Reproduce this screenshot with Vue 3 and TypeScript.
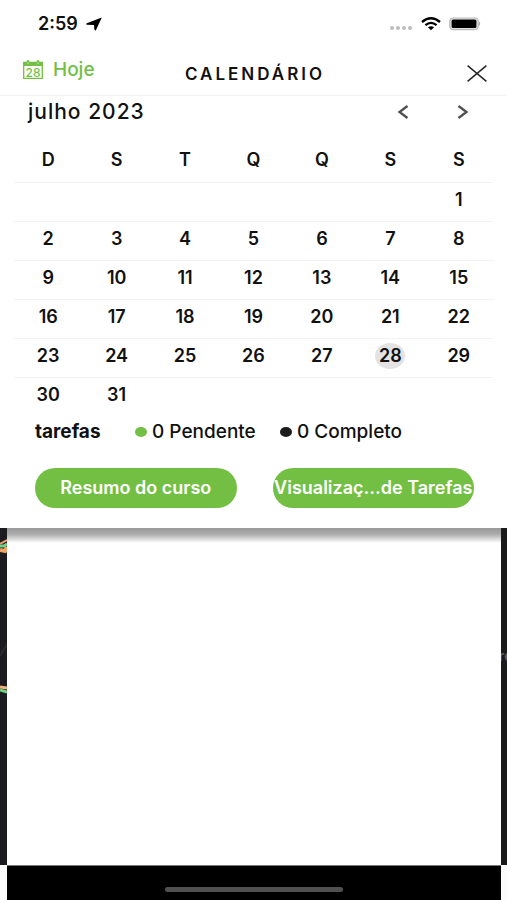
<script setup lang="ts">
import { computed, ref } from 'vue'

interface Weekday {
  letter: string
  name: string
}

const weekdays: Weekday[] = [
  { letter: 'D', name: 'domingo' },
  { letter: 'S', name: 'segunda' },
  { letter: 'T', name: 'terça' },
  { letter: 'Q', name: 'quarta' },
  { letter: 'Q', name: 'quinta' },
  { letter: 'S', name: 'sexta' },
  { letter: 'S', name: 'sábado' },
]
const months = [
  'janeiro', 'fevereiro', 'março', 'abril', 'maio', 'junho',
  'julho', 'agosto', 'setembro', 'outubro', 'novembro', 'dezembro',
]

const year = ref(2023)
const month = ref(6)
const selected = ref(28)
const pending = ref(0)
const complete = ref(0)

const weeks = computed<(number | null)[][]>(() => {
  const lead = new Date(year.value, month.value, 1).getDay()
  const count = new Date(year.value, month.value + 1, 0).getDate()
  const cells: (number | null)[] = Array(lead).fill(null)
  for (let d = 1; d <= count; d++) cells.push(d)
  while (cells.length % 7) cells.push(null)
  const rows: (number | null)[][] = []
  for (let i = 0; i < cells.length; i += 7) rows.push(cells.slice(i, i + 7))
  return rows
})

function shift(step: number) {
  const next = new Date(year.value, month.value + step, 1)
  year.value = next.getFullYear()
  month.value = next.getMonth()
}

function goToday() {
  year.value = 2023
  month.value = 6
  selected.value = 28
}
</script>

<template>
  <div class="screen">
    <section class="sheet">
      <div class="status">
        <span class="time">2:59</span>
        <svg class="arrow" width="16" height="14" viewBox="0 0 16 14" aria-hidden="true">
          <path d="M15.8 0.4 L10 13 Q9 14.2 8.4 12.6 L8 8 L1 7.8 Q-0.6 7.2 0.8 6.2 Z" fill="#000" />
        </svg>
        <span class="grow"></span>
        <svg width="24" height="14" viewBox="0 0 24 14" aria-hidden="true">
          <g fill="#bdbdbd">
            <circle cx="3" cy="11" r="2" /><circle cx="9" cy="11" r="2" />
            <circle cx="15" cy="11" r="2" /><circle cx="21" cy="11" r="2" />
          </g>
        </svg>
        <svg class="wifi" width="20" height="14" viewBox="0 0 20 14" aria-hidden="true">
          <g fill="none" stroke="#000" stroke-width="2.3">
            <path d="M1 5 Q10 -2.4 19 5" />
            <path d="M4.4 8.2 Q10 3.6 15.6 8.2" />
          </g>
          <path d="M6.9 10.3 Q10 8 13.1 10.3 L10 13.2 Z" fill="#000" />
        </svg>
        <svg width="32" height="14" viewBox="0 0 32 14" aria-hidden="true">
          <rect x="0.8" y="1" width="28.4" height="11.6" rx="3.5" fill="#e4e4e4" stroke="#b9b9b9" stroke-width="1.2" />
          <rect x="2.6" y="2.6" width="24.8" height="8.4" rx="1.6" fill="#000" />
          <path d="M30 4.6 Q32.4 6.8 30 9 Z" fill="#a8a8a8" />
        </svg>
      </div>

      <header class="bar">
        <button class="today" type="button" @click="goToday">
          <svg width="20" height="19" viewBox="0 0 20 19" aria-hidden="true">
            <path d="M0.7 2.5 H19.3 V18.3 H0.7 Z" fill="#fff" stroke="#72bf44" stroke-width="1.3" />
            <path d="M0.5 2 H19.5 V6 H0.5 Z" fill="#72bf44" />
            <path d="M5 0.3 V4 M15 0.3 V4" stroke="#72bf44" stroke-width="2.4" />
            <path d="M5 2.6 V4.2 M15 2.6 V4.2" stroke="#fff" stroke-width="0.7" />
            <text x="10" y="16.6" text-anchor="middle" font-size="12" fill="#72bf44">28</text>
          </svg>
          <span>Hoje</span>
        </button>
        <h1>CALENDÁRIO</h1>
        <button class="close" type="button" aria-label="Fechar">
          <svg width="20" height="17" viewBox="0 0 20 17" aria-hidden="true">
            <path d="M0.6 0.6 L19.4 16.4 M19.4 0.6 L0.6 16.4" fill="none" stroke="#222" stroke-width="1.4" />
          </svg>
        </button>
      </header>

      <div class="month">
        <h2>{{ months[month] }} {{ year }}</h2>
        <button type="button" aria-label="Mês anterior" @click="shift(-1)">
          <svg width="12" height="14" viewBox="0 0 12 14" aria-hidden="true">
            <path d="M10.5 1 L2.5 7 L10.5 13" fill="none" stroke="#505050" stroke-width="2.3" />
          </svg>
        </button>
        <button type="button" aria-label="Próximo mês" @click="shift(1)">
          <svg width="12" height="14" viewBox="0 0 12 14" aria-hidden="true">
            <path d="M1.5 1 L9.5 7 L1.5 13" fill="none" stroke="#505050" stroke-width="2.3" />
          </svg>
        </button>
      </div>

      <table class="days">
        <thead>
          <tr>
            <th v-for="d in weekdays" :key="d.name" scope="col" :abbr="d.name">{{ d.letter }}</th>
          </tr>
        </thead>
        <tbody>
          <tr v-for="(week, w) in weeks" :key="w">
            <td v-for="(day, i) in week" :key="i">
              <button
                v-if="day"
                type="button"
                :class="{ picked: day === selected }"
                :aria-pressed="day === selected"
                @click="selected = day"
              >{{ day }}</button>
            </td>
          </tr>
        </tbody>
      </table>

      <div class="tasks">
        <strong>tarefas</strong>
        <span class="count"><i class="dot green"></i>{{ pending }} Pendente</span>
        <span class="count"><i class="dot"></i>{{ complete }} Completo</span>
      </div>

      <div class="actions">
        <button type="button">Resumo do curso</button>
        <button type="button">Visualizaç...de Tarefas</button>
      </div>
    </section>

    <main class="behind">
      <div class="map">
        <svg width="7" height="200" viewBox="0 0 7 200" aria-hidden="true">
          <path d="M0 16 L7 12" stroke="#e9a06c" stroke-width="2" />
          <path d="M0 18 H4 L7 16" fill="none" stroke="#72d38a" stroke-width="3" />
          <path d="M0 22 L5 23 L7 19" fill="none" stroke="#f0a469" stroke-width="4" />
          <path d="M0 159 L7 160" stroke="#eeb07c" stroke-width="3" />
          <path d="M0 162 L7 164" stroke="#74cf80" stroke-width="3" />
          <path d="M0 128 L7 116" stroke="#2b2b2d" stroke-width="2" />
        </svg>
      </div>
      <div class="content"></div>
      <div class="map right"><span class="place">re</span></div>
    </main>

    <footer class="home"><div class="well"><span class="grip"></span></div></footer>
  </div>
</template>

<style>
body {
  margin: 0;
  background: #fff;
}
</style>

<style scoped>
.screen {
  display: flex;
  flex-direction: column;
  min-height: 100vh;
  overflow: hidden;
  color: #111;
  font-family: Inter, "Open Sans", sans-serif;
  font-size: 18px;
  font-weight: 500;
  line-height: 24px;
}
button {
  padding: 0;
  border: 0;
  background: none;
  color: inherit;
  font: inherit;
  cursor: pointer;
}
svg {
  display: block;
}
.sheet {
  background: #fff;
}
.status {
  display: flex;
  align-items: center;
  height: 48px;
  padding: 0 26px 0 38px;
}
.time {
  font-weight: 600;
}
.arrow {
  margin-left: 8px;
}
.grow {
  flex: 1;
}
.wifi {
  margin: 0 8px;
}
.bar {
  display: grid;
  grid-template-columns: 1fr auto 1fr;
  align-items: center;
  height: 47px;
  padding: 0 20px 0 23px;
  border-bottom: 1px solid #f3f3f3;
}
.today {
  display: flex;
  align-items: center;
  justify-self: start;
  gap: 10px;
  padding-bottom: 4px;
  color: #72bf44;
  font-size: 19px;
}
h1,
h2 {
  margin: 0;
  font-weight: 500;
}
h1 {
  padding-top: 4px;
  font-size: 17px;
  font-weight: 600;
  letter-spacing: 3px;
}
.close {
  justify-self: end;
  padding-top: 4px;
}
.month {
  display: flex;
  align-items: center;
  gap: 48px;
  height: 32px;
  padding: 0 38px 0 28px;
}
h2 {
  flex: 1;
  font-size: 21px;
  letter-spacing: 1px;
}
.days {
  width: calc(100% - 28px);
  margin: 9px 14px 0;
  border-collapse: collapse;
  table-layout: fixed;
}
th,
td {
  height: 34px;
  padding: 0 0 4px;
  text-align: center;
  font-weight: 600;
}
th {
  height: 45px;
  padding: 0;
}
tbody tr {
  border-top: 1px solid #f3f3f3;
}
td button {
  min-width: 30px;
  height: 26px;
  border-radius: 50%;
  line-height: 26px;
}
td .picked {
  background: #e3e3e3;
}
.tasks {
  display: flex;
  align-items: center;
  height: 32px;
  padding: 0 35px;
  font-size: 19px;
}
.tasks strong {
  width: 100px;
  font-weight: 700;
}
.count {
  display: flex;
  align-items: center;
  gap: 5px;
  min-width: 145px;
}
.dot {
  width: 12px;
  height: 10px;
  border-radius: 50%;
  background: #1b1b1b;
}
.dot.green {
  background: #72bf44;
}
.actions {
  display: grid;
  grid-template-columns: 1fr 1fr;
  gap: 36px;
  padding: 20px 33px 20px 35px;
}
.actions button {
  height: 40px;
  border-radius: 20px;
  background: #72bf44;
  color: #fff;
  font-weight: 600;
  white-space: nowrap;
}
.behind {
  display: grid;
  flex: 1;
  grid-template-columns: 7px 1fr 6px;
}
.map {
  position: relative;
  overflow: hidden;
  background: #1c1c1e;
}
.map.right {
  background: #191b1c;
}
.place {
  position: absolute;
  top: 116px;
  left: -2px;
  color: #666;
  font-size: 14px;
}
.content {
  background: linear-gradient(#999, #aaa 6px, #fff 15px);
}
.home {
  padding: 0 6px 0 7px;
  background: #fbfbfb;
}
.well {
  display: flex;
  justify-content: center;
  height: 34px;
  border-top: 1px solid #777;
  background: #000;
}
.grip {
  width: 36%;
  height: 5px;
  margin-top: 21px;
  border-radius: 3px;
  background: #505050;
}
</style>
